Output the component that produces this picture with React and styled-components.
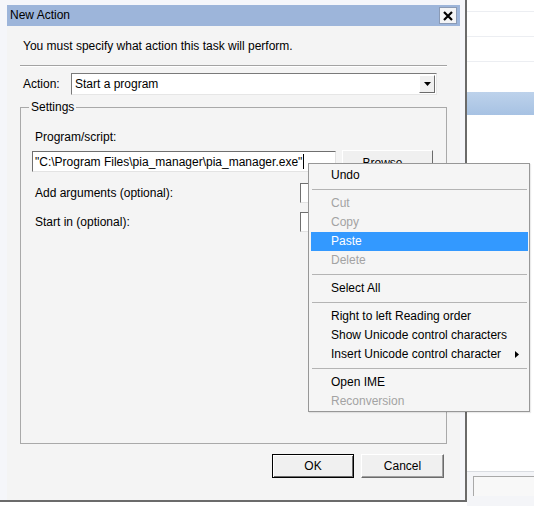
import React from "react";
import styled, { createGlobalStyle } from "styled-components";

const Global = createGlobalStyle`
  html, body { margin: 0; padding: 0; background: #fff; }
  body {
    font-family: "Liberation Sans", Arial, sans-serif;
    font-size: 12px;
    color: #000;
  }
  * { box-sizing: border-box; }
`;

const Screen = styled.div`
  position: relative;
  display: flex;
  width: 534px;
  height: 506px;
  overflow: hidden;
  background: #fff;
`;

const Dialog = styled.div`
  flex: 0 0 467px;
  height: 502px;
  display: flex;
  flex-direction: column;
  padding: 5px 5px 0 7px;
  background: #f5f6fa;
  border-right: 2px solid #6b6b6b;
  border-bottom: 2px solid #6b6b6b;
`;

const TitleBar = styled.div`
  height: 21px;
  flex: none;
  display: flex;
  align-items: center;
  justify-content: space-between;
  padding: 0 3px 0 3px;
  background: #9db5da;
  color: #000;
  line-height: 21px;
`;

const CloseButton = styled.div`
  width: 18px;
  height: 17px;
  display: flex;
  align-items: center;
  justify-content: center;
  background: #f3f4f6;
  border: 1px solid #8a9ab5;
`;

const Content = styled.div`
  flex: 1;
  display: flex;
  flex-direction: column;
  padding: 0 13px;
  background: #f4f4f4;
`;

const Intro = styled.div`
  margin-top: 13px;
  padding-left: 3px;
  line-height: 15px;
`;

const Rule = styled.div`
  margin-top: 11px;
  height: 2px;
  border-top: 1px solid #a3a3a3;
  border-bottom: 1px solid #ffffff;
`;

const ActionRow = styled.div`
  margin-top: 6px;
  height: 22px;
  display: flex;
  align-items: center;
  padding-right: 10px;
`;

const FieldLabel = styled.div`
  padding-left: 3px;
  line-height: 15px;
  width: ${(p) => (p.$width ? `${p.$width}px` : "auto")};
  flex: none;
`;

const Select = styled.div`
  flex: 1;
  height: 22px;
  display: flex;
  align-items: center;
  justify-content: space-between;
  padding: 0 1px 0 3px;
  background: #fff;
  border: 1px solid;
  border-color: #7a7a7a #e6e6e6 #e6e6e6 #7a7a7a;
`;

const DropButton = styled.div`
  width: 16px;
  height: 18px;
  display: flex;
  align-items: center;
  justify-content: center;
  background: #f0f0f0;
  border: 1px solid;
  border-color: #ffffff #6b6b6b #6b6b6b #ffffff;
`;

const Group = styled.fieldset`
  margin: 5px 0 0 0;
  height: 344px;
  flex: none;
  padding: 0 13px 0 11px;
  border: 1px solid #a9a9a9;
  display: flex;
  flex-direction: column;
  min-width: 0;
`;

const Legend = styled.legend`
  margin-left: -3px;
  padding: 0 2px;
  line-height: 14px;
`;

const ProgLabel = styled(FieldLabel)`
  margin-top: 16px;
`;

const ProgRow = styled.div`
  margin-top: 5px;
  height: 23px;
  display: flex;
  align-items: center;
  gap: 6px;
`;

const TextInput = styled.div`
  height: ${(p) => p.$h || 20}px;
  flex: ${(p) => (p.$grow ? 1 : "none")};
  display: flex;
  align-items: center;
  padding-left: 2px;
  background: #fff;
  white-space: nowrap;
  overflow: hidden;
  border: 1px solid;
  border-color: #6f6f6f #e3e3e3 #e3e3e3 #6f6f6f;
`;

const Caret = styled.span`
  display: inline-block;
  width: 1px;
  height: 15px;
  margin-left: 1px;
  background: #000;
`;

const Browse = styled.div`
  width: 91px;
  height: 23px;
  flex: none;
  display: flex;
  align-items: center;
  justify-content: center;
  padding-top: 3px;
  background: #f0f0f0;
  border: 1px solid;
  border-color: #ffffff #6b6b6b #6b6b6b #ffffff;
`;

const ArgsGrid = styled.div`
  margin-top: 10px;
  display: grid;
  grid-template-columns: 1fr 133px;
  grid-auto-rows: 20px;
  row-gap: 9px;
  align-items: center;
`;

const ButtonRow = styled.div`
  margin-top: 10px;
  display: flex;
  justify-content: flex-end;
  gap: 7px;
  padding-right: 3px;
`;

const PushButton = styled.div`
  width: ${(p) => p.$w}px;
  height: 24px;
  display: flex;
  align-items: center;
  justify-content: center;
  background: #f0f0f0;
  border: 1px solid;
  border-color: ${(p) =>
    p.$default ? "#000" : "#ffffff #6b6b6b #6b6b6b #ffffff"};
  box-shadow: ${(p) =>
    p.$default
      ? "inset 1px 1px 0 #fff, inset -1px -1px 0 #6b6b6b"
      : "inset -1px -1px 0 #a0a0a0"};
`;

/* background window */
const Backdrop = styled.div`
  flex: 1;
  display: flex;
  flex-direction: column;
  background: #fff;
`;

const ListRow = styled.div`
  height: ${(p) => p.$h}px;
  flex: none;
  border-bottom: 1px solid #eceef2;
`;

const Spacer = styled.div`
  height: ${(p) => p.$h}px;
  flex: none;
`;

const HeaderBar = styled.div`
  height: 23px;
  flex: none;
  background: linear-gradient(#bdd2eb, #a7c2e3);
`;

const Filler = styled.div`
  flex: 1;
`;

const StatusBar = styled.div`
  height: 35px;
  flex: none;
  padding: 4px 0 0 6px;
  border-top: 1px solid #dadde2;
  background: #f4f5f8;
`;

const StatusBox = styled.div`
  height: 20px;
  background: #f8f8f8;
  border-left: 1px solid #a9a9a9;
  border-top: 1px solid #a9a9a9;
`;

/* context menu */
const Menu = styled.div`
  position: absolute;
  left: 308px;
  top: 163px;
  width: 222px;
  height: 249px;
  padding-top: 2px;
  background: #f5f5f5;
  border: 1px solid #979797;
  box-shadow: 1px 1px 1px rgba(0, 0, 0, 0.08);
`;

const MenuItem = styled.div`
  height: 19px;
  line-height: 19px;
  margin: 0 1px 0 2px;
  padding: 0 9px 0 20px;
  display: flex;
  align-items: center;
  justify-content: space-between;
  white-space: nowrap;
  color: ${(p) => (p.$active ? "#fff" : p.$disabled ? "#a3a3a3" : "#000")};
  background: ${(p) => (p.$active ? "#3399ff" : "transparent")};
`;

const MenuSep = styled.div`
  height: 9px;
  margin: 0 2px 0 3px;
  display: flex;
  align-items: center;
  &::before {
    content: "";
    flex: 1;
    height: 1px;
    background: #b4b4b4;
  }
`;

const menuItems = [
  { label: "Undo" },
  { sep: true },
  { label: "Cut", disabled: true },
  { label: "Copy", disabled: true },
  { label: "Paste", active: true },
  { label: "Delete", disabled: true },
  { sep: true },
  { label: "Select All" },
  { sep: true },
  { label: "Right to left Reading order" },
  { label: "Show Unicode control characters" },
  { label: "Insert Unicode control character", sub: true },
  { sep: true },
  { label: "Open IME" },
  { label: "Reconversion", disabled: true },
];

export default function App() {
  return (
    <Screen>
      <Global />
      <Dialog>
        <TitleBar>
          <span>New Action</span>
          <CloseButton>
            <svg width="10" height="10" viewBox="0 0 10 10">
              <path d="M1 1 L9 9 M9 1 L1 9" stroke="#000" strokeWidth="2.2" />
            </svg>
          </CloseButton>
        </TitleBar>
        <Content>
          <Intro>You must specify what action this task will perform.</Intro>
          <Rule />
          <ActionRow>
            <FieldLabel $width={51}>Action:</FieldLabel>
            <Select>
              <span>Start a program</span>
              <DropButton>
                <svg width="7" height="4" viewBox="0 0 7 4">
                  <path d="M0 0 H7 L3.5 4 Z" fill="#000" />
                </svg>
              </DropButton>
            </Select>
          </ActionRow>
          <Group>
            <Legend>Settings</Legend>
            <ProgLabel>Program/script:</ProgLabel>
            <ProgRow>
              <TextInput $grow $h={21}>
                "C:\Program Files\pia_manager\pia_manager.exe"
                <Caret />
              </TextInput>
              <Browse>Browse...</Browse>
            </ProgRow>
            <ArgsGrid>
              <FieldLabel>Add arguments (optional):</FieldLabel>
              <TextInput />
              <FieldLabel>Start in (optional):</FieldLabel>
              <TextInput />
            </ArgsGrid>
          </Group>
          <ButtonRow>
            <PushButton $w={82} $default>
              OK
            </PushButton>
            <PushButton $w={83}>Cancel</PushButton>
          </ButtonRow>
        </Content>
      </Dialog>
      <Backdrop>
        <ListRow $h={12} />
        <ListRow $h={25} />
        <ListRow $h={25} />
        <Spacer $h={30} />
        <HeaderBar />
        <Filler />
        <StatusBar>
          <StatusBox />
        </StatusBar>
      </Backdrop>
      <Menu>
        {menuItems.map((it, i) =>
          it.sep ? (
            <MenuSep key={i} />
          ) : (
            <MenuItem key={i} $active={it.active} $disabled={it.disabled}>
              <span>{it.label}</span>
              {it.sub && (
                <svg width="4" height="7" viewBox="0 0 4 7">
                  <path d="M0 0 L4 3.5 L0 7 Z" fill="#000" />
                </svg>
              )}
            </MenuItem>
          )
        )}
      </Menu>
    </Screen>
  );
}
